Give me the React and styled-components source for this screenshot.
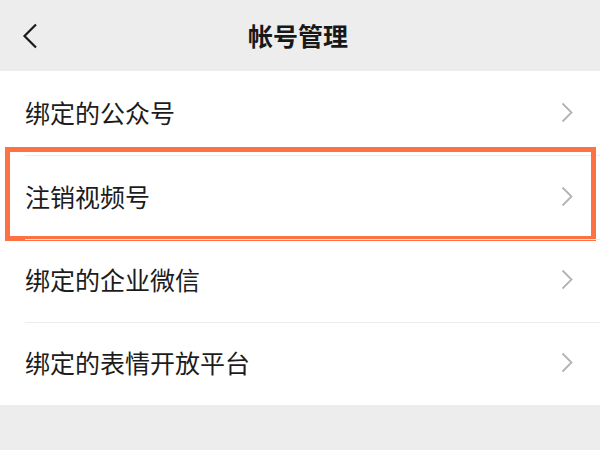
import React from "react";
import styled, { createGlobalStyle } from "styled-components";

const Global = createGlobalStyle`
  html, body { margin: 0; padding: 0; background: #ededed; }
  body { font-family: "Noto Sans CJK SC", "Noto Sans", sans-serif; }
`;

const Page = styled.div`
  width: 600px;
  height: 450px;
  background: #ededed;
  display: flex;
  flex-direction: column;
  overflow: hidden;
`;

const Header = styled.header`
  height: 71px;
  flex: none;
  display: grid;
  grid-template-columns: 60px 1fr 60px;
  align-items: center;
  background: #ededed;
`;

const BackButton = styled.button`
  border: 0;
  background: transparent;
  padding: 0 0 0 22px;
  height: 71px;
  display: flex;
  align-items: center;
  cursor: pointer;
`;

const Title = styled.h1`
  margin: 0;
  text-align: center;
  font-size: 25px;
  font-weight: 700;
  color: #181818;
  letter-spacing: 0;
  line-height: 1;
  padding-top: 0;
  margin-left: -4px;
`;

const List = styled.ul`
  list-style: none;
  margin: 0;
  padding: 0;
  background: #fff;
`;

const Row = styled.li`
  position: relative;
  height: ${(p) => p.$h}px;
  display: flex;
  align-items: center;
  justify-content: space-between;
  padding: 0 27px 2px 25px;
  box-sizing: border-box;
  &:not(:first-child)::before {
    content: "";
    position: absolute;
    left: 25px;
    right: 0;
    top: 0;
    height: 1px;
    background: #ececec;
  }
`;

const Label = styled.span`
  font-size: 25px;
  color: #1c1c1c;
  line-height: 1;
`;

const Highlight = styled.div`
  position: absolute;
  left: 5px;
  right: 4px;
  top: -8px;
  bottom: -2px;
  border: 5px solid #fd7144;
  pointer-events: none;
`;

const Chevron = () => (
  <svg width="12" height="21" viewBox="0 0 12 21" fill="none">
    <path d="M1.5 1.5 L10.5 10.5 L1.5 19.5" stroke="#b3b3b3" strokeWidth="1.8" />
  </svg>
);

const BackIcon = () => (
  <svg width="16" height="26" viewBox="0 0 16 26" fill="none">
    <path d="M14 1.5 L2.5 13 L14 24.5" stroke="#1a1a1a" strokeWidth="2.2" />
  </svg>
);

const items = [
  { label: "绑定的公众号", h: 84 },
  { label: "注销视频号", h: 84, hl: true },
  { label: "绑定的企业微信", h: 83 },
  { label: "绑定的表情开放平台", h: 83 },
];

export default function App() {
  return (
    <>
      <Global />
      <Page>
        <Header>
          <BackButton aria-label="返回">
            <BackIcon />
          </BackButton>
          <Title>帐号管理</Title>
          <span />
        </Header>
        <List>
          {items.map((it) => (
            <Row key={it.label} $h={it.h}>
              <Label>{it.label}</Label>
              <Chevron />
              {it.hl && <Highlight />}
            </Row>
          ))}
        </List>
      </Page>
    </>
  );
}
